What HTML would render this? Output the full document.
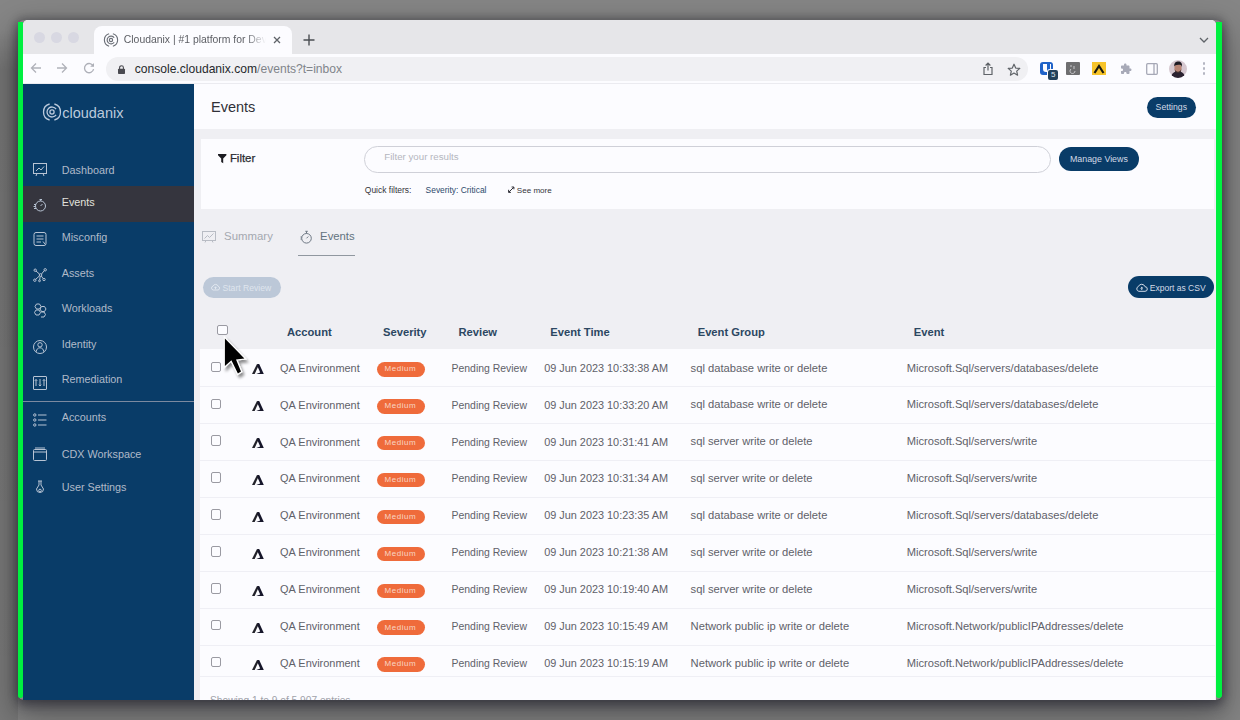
<!DOCTYPE html>
<html><head><meta charset="utf-8">
<style>
*{box-sizing:border-box;margin:0;padding:0}
html,body{width:1240px;height:720px;overflow:hidden}
body{background:#868686;font-family:"Liberation Sans",sans-serif;position:relative}
.a{position:absolute}
.t{position:absolute;white-space:nowrap;line-height:1}
svg{position:absolute;overflow:visible}
#win{left:23px;top:20px;width:1193px;height:680px;overflow:hidden;background:#fcfcff;border-radius:5px 5px 0 0}
#shadow{left:18px;top:20px;width:1204px;height:680px;border-radius:6px;box-shadow:0 0 8px 2px rgba(10,10,20,.25),0 6px 12px 1px rgba(20,20,40,.35),0 14px 36px 6px rgba(0,0,0,.30)}
.green{background:#00f040;top:22px;height:676px;border-radius:0 0 3px 3px}
#tabstrip{left:0;top:0;width:1193px;height:34px;background:#e6e6e9}
.tl{width:11px;height:11px;border-radius:50%;background:#d8d8e2}
#tab{left:71px;top:6px;width:198px;height:28px;background:#fcfcff;border-radius:8px 8px 0 0}
#toolbar{left:0;top:34px;width:1193px;height:30px;background:#fcfcff}
#omni{left:83px;top:36.5px;width:922px;height:24px;border-radius:12px;background:#f0f0f3}
#side{left:0;top:64px;width:171px;height:616px;background:#093c68;overflow:hidden}
.navact{left:0;top:102px;width:171px;height:36px;background:#35353e}
#main{left:171px;top:64px;width:1022px;height:616px;background:#efeff3;overflow:hidden}
.card{background:#fcfcff}
.btn{position:absolute;background:#093c68;border-radius:13px}
.cb{position:absolute;width:10.5px;height:10.5px;border:1px solid #9a9aa2;border-radius:2px;background:#fcfcff}
.sep{position:absolute;height:1px;background:#efeff5}
.badge{position:absolute;background:#ef6b3b;border-radius:7.5px;width:48px;height:14.5px}
</style></head>
<body>
<div class="a" style="left:0;top:30px;width:18px;height:690px;background:linear-gradient(180deg,rgba(0,0,0,0) 0,rgba(0,0,0,.12) 40px,rgba(0,0,0,.09) 100%)"></div>
<div id="shadow" class="a"></div>
<div class="a green" style="left:18px;width:5px"></div>
<div class="a green" style="left:1216px;width:6px"></div>
<div id="win" class="a">
<div id="tabstrip" class="a">
<div class="a tl" style="left:11.3px;top:12.0px"></div>
<div class="a tl" style="left:27.5px;top:12.0px"></div>
<div class="a tl" style="left:44.5px;top:12.0px"></div>
<div id="tab" class="a"></div>
</div>
<svg class="a" style="left:80.5px;top:12.600000000000001px" width="14" height="14" viewBox="0 0 18 18"><g fill="none" stroke="#6c7078" stroke-width="1.5"><path d="M6.6 1A8.3 8.3 0 0 0 6.6 17"/><path d="M11.4 1A8.3 8.3 0 0 1 11.4 17"/><path d="M13.1 6.1A5 5 0 1 0 13.1 11.9"/><circle cx="9" cy="9" r="2.1"/></g></svg>
<div class="t" style="left:100.8px;top:15.00px;font-size:10.4px;color:#5c5e64;width:142px;overflow:hidden;-webkit-mask-image:linear-gradient(90deg,#000 86%,transparent 100%)">Cloudanix | #1 platform for Dev</div>
<svg class="a" style="left:250px;top:15.5px" width="8" height="8" viewBox="0 0 8 8"><path d="M1 1L7 7M7 1L1 7" stroke="#5f6368" stroke-width="1.3"/></svg>
<svg class="a" style="left:280px;top:14px" width="12" height="12" viewBox="0 0 12 12"><path d="M6 0.5V11.5M0.5 6H11.5" stroke="#4a4d52" stroke-width="1.4"/></svg>
<svg class="a" style="left:1176px;top:17px" width="10" height="6" viewBox="0 0 10 6"><path d="M1 1L5 5L9 1" fill="none" stroke="#5f6368" stroke-width="1.3"/></svg>
<div id="toolbar" class="a"></div>
<div class="a" style="left:0;top:63px;width:1193px;height:1px;background:#ebebf0"></div>
<div id="omni" class="a"></div>
<svg class="a" style="left:7px;top:42px" width="12" height="12" viewBox="0 0 12 12"><path d="M11 6H1.5M6 1.5L1.5 6L6 10.5" fill="none" stroke="#b0b2ba" stroke-width="1.3"/></svg>
<svg class="a" style="left:33px;top:42px" width="12" height="12" viewBox="0 0 12 12"><path d="M1 6H10.5M6 1.5L10.5 6L6 10.5" fill="none" stroke="#b0b2ba" stroke-width="1.3"/></svg>
<svg class="a" style="left:59.5px;top:42px" width="12" height="12" viewBox="0 0 12 12"><path d="M10.3 4.2A4.6 4.6 0 1 0 10.6 7.2" fill="none" stroke="#aeb0b8" stroke-width="1.3"/><path d="M11 1V4.8H7.2Z" fill="#aeb0b8"/></svg>
<svg class="a" style="left:95px;top:44.5px" width="7" height="9" viewBox="0 0 7 9"><path d="M1.6 4V2.6A1.9 1.9 0 0 1 5.4 2.6V4" fill="none" stroke="#4a4a50" stroke-width="1.1"/><rect x="0" y="3.8" width="7" height="5.2" rx="0.8" fill="#4a4a50"/></svg>
<div class="t" style="left:111.7px;top:42.66px;font-size:12.1px;color:#26282c;">console.cloudanix.com<span style="color:#80848a">/events?t=inbox</span></div>
<svg class="a" style="left:959px;top:42px" width="12" height="14" viewBox="0 0 12 14"><path d="M4 5.5H2V12.5H10V5.5H8M6 8.5V1.2M3.6 3.5L6 1.2L8.4 3.5" fill="none" stroke="#5f6368" stroke-width="1.2"/></svg>
<svg class="a" style="left:984px;top:42.5px" width="14" height="14" viewBox="0 0 14 14"><path d="M7 1.2L8.7 5.1L12.8 5.4L9.7 8.1L10.6 12.2L7 10L3.4 12.2L4.3 8.1L1.2 5.4L5.3 5.1Z" fill="none" stroke="#5f6368" stroke-width="1.2" stroke-linejoin="round"/></svg>
<div class="a" style="left:1017px;top:42.3px;width:13px;height:12.5px;background:#1f62c8;border-radius:3px"></div>
<div class="a" style="left:1019.7px;top:44px;width:8px;height:8.3px;background:#fcfcff;border-radius:0 0 4px 3px"></div>
<div class="a" style="left:1024px;top:44px;width:2.6px;height:6.5px;background:#1f62c8"></div>
<div class="a" style="left:1024.3px;top:49.3px;width:11.7px;height:11.7px;background:#fcfcff;border-radius:3px"></div>
<div class="a" style="left:1025.3px;top:50.3px;width:9.7px;height:9.7px;background:#22405a;border-radius:2px;color:#dde4ee;font-size:8px;line-height:9.7px;text-align:center">5</div>
<div class="a" style="left:1043px;top:42.3px;width:13.5px;height:13px;background:#6e6e70;border-radius:1px"></div>
<svg class="a" style="left:1045px;top:44px" width="10" height="10" viewBox="0 0 10 10"><path d="M2 2H4M6 2V5M3 5A2.5 2.5 0 1 0 7 7" fill="none" stroke="#c8c8cc" stroke-width="1"/></svg>
<div class="a" style="left:1068.8px;top:41.8px;width:14.2px;height:13.6px;background:#f7c42a"></div>
<svg class="a" style="left:1070px;top:43.5px" width="12" height="10" viewBox="0 0 12 10"><path d="M1.5 9L6 2L10.5 9" fill="none" stroke="#1a1a10" stroke-width="2.2" stroke-linejoin="miter"/></svg>
<svg class="a" style="left:1096.5px;top:43px" width="12" height="12" viewBox="0 0 24 24"><path d="M20.5 11H19V7c0-1.1-.9-2-2-2h-4V3.5C13 2.12 11.88 1 10.5 1S8 2.12 8 3.5V5H4c-1.1 0-1.99.9-1.99 2v3.8H3.5c1.49 0 2.7 1.21 2.7 2.7s-1.21 2.7-2.7 2.7H2V20c0 1.1.9 2 2 2h3.8v-1.5c0-1.490 1.21-2.7 2.7-2.7 1.49 0 2.7 1.21 2.7 2.7V22H17c1.1 0 2-.9 2-2v-4h1.5c1.38 0 2.5-1.12 2.5-2.5S21.880 11 20.5 11z" fill="#a8aab8"/></svg>
<svg class="a" style="left:1122.8px;top:42.9px" width="12" height="12" viewBox="0 0 12 12"><rect x="0.7" y="0.7" width="10.6" height="10.6" rx="1" fill="none" stroke="#a6a8b6" stroke-width="1.3"/><path d="M8 0.7V11.3" stroke="#a6a8b6" stroke-width="1.3"/></svg>
<svg class="a" style="left:1145.9px;top:39.7px" width="18" height="18" viewBox="0 0 18 18"><defs><clipPath id="av"><circle cx="9" cy="9" r="9"/></clipPath></defs><g clip-path="url(#av)"><rect width="18" height="18" fill="#d6c8d0"/><path d="M2 18C2.5 13 5 11.5 9 11.5S15.5 13 16 18Z" fill="#2a2230"/><ellipse cx="9" cy="8" rx="3.6" ry="4.4" fill="#b88474"/><path d="M5.2 6.5C5 2.8 7 1.6 9.4 1.6S13.4 3 13 7L12.2 5.2C10.5 4.6 8 4.6 6 5.4Z" fill="#1e1a22"/><path d="M5.8 9C6.5 12.6 11.5 12.6 12.2 9L12 11.5C10.5 13.4 7.5 13.4 6 11.5Z" fill="#3a2a2a"/></g></svg>
<div class="a" style="left:1179.8px;top:42.3px;width:2.4px;height:2.4px;border-radius:50%;background:#b4b6c2"></div>
<div class="a" style="left:1179.8px;top:47.3px;width:2.4px;height:2.4px;border-radius:50%;background:#b4b6c2"></div>
<div class="a" style="left:1179.8px;top:52.3px;width:2.4px;height:2.4px;border-radius:50%;background:#b4b6c2"></div>
<div id="side" class="a">
<div class="a navact"></div>
<svg style="left:19.9px;top:18.7px" width="18" height="18" viewBox="0 0 18 18"><g fill="none" stroke="#bccadc" stroke-width="1.3"><path d="M6.6 1A8.3 8.3 0 0 0 6.6 17"/><path d="M11.4 1A8.3 8.3 0 0 1 11.4 17"/><path d="M13.1 6.1A5 5 0 1 0 13.1 11.9"/><circle cx="9" cy="9" r="2.1"/></g></svg>
<div class="t" style="left:39.2px;top:21.63px;font-size:14.5px;color:#bccadc;letter-spacing:0px">cloudanix</div>
<div class="t" style="left:38.7px;top:80.96px;font-size:10.8px;color:#b0bac8;">Dashboard</div>
<div class="t" style="left:38.7px;top:112.66px;font-size:10.8px;color:#e2e2dc;">Events</div>
<div class="t" style="left:38.7px;top:148.36px;font-size:10.8px;color:#b0bac8;">Misconfig</div>
<div class="t" style="left:38.7px;top:183.86px;font-size:10.8px;color:#b0bac8;">Assets</div>
<div class="t" style="left:38.7px;top:219.26px;font-size:10.8px;color:#b0bac8;">Workloads</div>
<div class="t" style="left:38.7px;top:254.66px;font-size:10.8px;color:#b0bac8;">Identity</div>
<div class="t" style="left:38.7px;top:290.06px;font-size:10.8px;color:#b0bac8;">Remediation</div>
<div class="t" style="left:38.7px;top:328.16px;font-size:10.8px;color:#b0bac8;">Accounts</div>
<div class="t" style="left:38.7px;top:365.16px;font-size:10.8px;color:#b0bac8;">CDX Workspace</div>
<div class="t" style="left:38.7px;top:397.66px;font-size:10.8px;color:#b0bac8;">User Settings</div>
<div class="a" style="left:0;top:316.5px;width:171px;height:1px;background:#7c8aa0"></div>
<svg style="left:9.8px;top:79.3px" width="14" height="14" viewBox="0 0 14 14"><g fill="none" stroke="#b8c4d4" stroke-width="1"><rect x="0.5" y="0.5" width="13" height="10"/><path d="M3 8L6 5L8 7L11 3.5M4 10.5L3 13M10 10.5L11 13"/></g></svg>
<svg style="left:9.8px;top:113.5px" width="14" height="14" viewBox="0 0 14 14"><g fill="none" stroke="#b8c4d4" stroke-width="1"><circle cx="7.5" cy="8" r="5"/><path d="M6.5 1.5H9M7.7 1.5V3M7.5 8L9.5 6M1 6.5H3M0.5 8.5H2.5M1 10.5H3"/></g></svg>
<svg style="left:9.8px;top:148.4px" width="14" height="14" viewBox="0 0 14 14"><g fill="none" stroke="#b8c4d4" stroke-width="1"><rect x="1" y="0.5" width="12" height="13" rx="2"/><path d="M3.5 4H10.5M3.5 7H10.5M3.5 10H8M10 9.5L12 12"/></g></svg>
<svg style="left:9.8px;top:184.4px" width="14" height="14" viewBox="0 0 14 14"><g fill="none" stroke="#b8c4d4" stroke-width="1"><circle cx="7.5" cy="7" r="1.3"/><circle cx="2.2" cy="2.2" r="1.2"/><circle cx="12.2" cy="1.8" r="1.2"/><circle cx="1.8" cy="12.2" r="1.2"/><circle cx="11" cy="11.5" r="1.2"/><circle cx="6.5" cy="12.8" r="0.9"/><path d="M3 3L6.6 6.2M11.4 2.5L8.4 6.2M2.6 11.4L6.6 7.8M10.2 10.7L8.3 8M7.2 8.3L6.7 11.9"/></g></svg>
<svg style="left:9.8px;top:219.0px" width="14" height="14" viewBox="0 0 14 14"><g fill="none" stroke="#b8c4d4" stroke-width="1"><path d="M3.5 1L6.5 1L8 3.5L6.5 6L3.5 6L2 3.5Z"/><path d="M8.5 3.5L11.5 3.5L13 6L11.5 8.5L8.5 8.5L7 6Z"/><path d="M3 7L6 7L7.5 9.5L6 12L3 12L1.5 9.5Z"/><path d="M8 9L11 9L12.5 11.5L11 14L8 14"/></g></svg>
<svg style="left:9.8px;top:255.8px" width="14" height="14" viewBox="0 0 14 14"><g fill="none" stroke="#b8c4d4" stroke-width="1"><circle cx="7" cy="7" r="6.5"/><circle cx="7" cy="4.8" r="2.2"/><path d="M3.2 11.8C3.6 9 5 7.8 7 7.8S10.4 9 10.8 11.8"/></g></svg>
<svg style="left:9.8px;top:291.9px" width="14" height="14" viewBox="0 0 14 14"><g fill="none" stroke="#b8c4d4" stroke-width="1"><rect x="0.5" y="0.5" width="13" height="13" rx="0.5"/><path d="M3 10V3.5M1.8 4.8L3 3.5L4.2 4.8M7 3V10M5.8 8.7L7 10L8.2 8.7M11 10V3.5M9.8 4.8L11 3.5L12.2 4.8"/></g></svg>
<svg style="left:9.8px;top:328.7px" width="14" height="14" viewBox="0 0 14 14"><g fill="none" stroke="#b8c4d4" stroke-width="1"><circle cx="1.8" cy="2" r="1.2"/><circle cx="1.8" cy="7" r="1.2"/><circle cx="1.8" cy="12" r="1.2"/><path d="M5 2H13.5M5 7H13.5M5 12H13.5"/></g></svg>
<svg style="left:9.8px;top:362.7px" width="14" height="14" viewBox="0 0 14 14"><g fill="none" stroke="#b8c4d4" stroke-width="1"><rect x="0.5" y="2.5" width="13" height="11" rx="1"/><path d="M0.5 5H13.5M2 1H12"/></g></svg>
<svg style="left:9.8px;top:396.0px" width="14" height="14" viewBox="0 0 14 14"><g fill="none" stroke="#b8c4d4" stroke-width="1"><path d="M6 1V5L3.5 9A3.3 3.3 0 1 0 10.5 9L8 5V1M5 1H9"/><circle cx="7" cy="10.5" r="1.3"/></g></svg>
</div>
<div id="main" class="a">
<div class="a card" style="left:0.0px;top:0.0px;width:1022.0px;height:45.0px;"></div>
<div class="a card" style="left:7.0px;top:54.5px;width:1013.0px;height:70.0px;"></div>
<div class="a card" style="left:6.0px;top:264.5px;width:1014.5px;height:351.5px;"></div>
<div class="t" style="left:17.0px;top:15.83px;font-size:14.5px;color:#303038;">Events</div>
<div class="btn" style="left:953px;top:12.799999999999997px;width:49px;height:21px"></div>
<div class="t" style="left:961.6px;top:18.94px;font-size:8.7px;color:#d3dae6;">Settings</div>
<svg style="left:23.8px;top:70.4px" width="8.4" height="9.2" viewBox="0 0 8.4 9.2"><path d="M0 0H8.4V1.2L5.2 4.6V9.2L3.2 8V4.6L0 1.2Z" fill="#1c1c22"/></svg>
<div class="t" style="left:35.9px;top:69.25px;font-size:11.4px;color:#2a2a30;-webkit-text-stroke:0.25px #2a2a30">Filter</div>
<div class="a" style="left:170.2px;top:62.2px;width:686.6px;height:26.6px;border:1px solid #cfd0d8;border-radius:13.3px;background:#fcfcff"></div>
<div class="t" style="left:190.3px;top:68.39px;font-size:9.7px;color:#b4b6be;">Filter your results</div>
<div class="btn" style="left:865.3px;top:62.7px;width:79.7px;height:24.6px;border-radius:12.3px"></div>
<div class="t" style="left:876.0px;top:70.71px;font-size:8.85px;color:#d3dae6;">Manage Views</div>
<div class="t" style="left:170.8px;top:102.43px;font-size:8.47px;color:#34343a;">Quick filters:</div>
<div class="t" style="left:231.6px;top:102.46px;font-size:8.44px;color:#2c4a6c;">Severity: Critical</div>
<svg style="left:313.6px;top:102.0px" width="6.5" height="7" viewBox="0 0 6.5 7"><path d="M0.8 6.2L5.8 1.2M3.6 1H5.9V3.3M0.6 3.8V6.4H2.9" fill="none" stroke="#303038" stroke-width="1"/></svg>
<div class="t" style="left:322.8px;top:102.77px;font-size:8.07px;color:#34343a;">See more</div>
<svg style="left:8.2px;top:147.0px" width="14" height="12" viewBox="0 0 14 12"><g fill="none" stroke="#b8bcc4" stroke-width="1"><rect x="0.5" y="0.5" width="13" height="9"/><path d="M2.5 7.5L5.5 4.5L7.5 6.5L11.5 2.5M4 9.5L3 11.5M10 9.5L11 11.5"/></g></svg>
<div class="t" style="left:30.1px;top:146.75px;font-size:11.4px;color:#a4a8b0;">Summary</div>
<svg style="left:105.6px;top:146.2px" width="12" height="14" viewBox="0 0 12 14"><g fill="none" stroke="#6e7884" stroke-width="1"><circle cx="6.5" cy="8.3" r="4.8"/><path d="M5.3 1.3H7.8M6.5 1.3V3.5M6.5 8.3L8.3 6.5M0.5 7H2M0.5 9H1.8"/></g></svg>
<div class="t" style="left:126.1px;top:146.83px;font-size:11.3px;color:#627280;">Events</div>
<div class="a " style="left:104.2px;top:170.5px;width:56.9px;height:1.7px;background:#90979f"></div>
<div class="btn" style="left:8.8px;top:192.6px;width:77.8px;height:21.4px;background:#bcc8d8;border-radius:11px"></div>
<svg style="left:17.0px;top:199.0px" width="9" height="8" viewBox="0 0 9 8"><path d="M2.2 7A2 2 0 0 1 2 3.1A2.8 2.8 0 0 1 7.2 3.3A1.9 1.9 0 0 1 7 7ZM4.5 6.2V3.8M3.5 4.8L4.5 3.8L5.5 4.8" fill="none" stroke="#e4eaf2" stroke-width="0.9"/></svg>
<div class="t" style="left:28.5px;top:200.12px;font-size:8.6px;color:#dfe5ee;">Start Review</div>
<div class="btn" style="left:933.9px;top:192.4px;width:86.1px;height:21.5px;border-radius:11px"></div>
<svg style="left:942.0px;top:198.6px" width="11.5" height="9" viewBox="0 0 11.5 9"><path d="M2.8 8.3A2.5 2.5 0 0 1 2.4 3.5A3.5 3.5 0 0 1 9 3.7A2.3 2.3 0 0 1 9 8.3ZM5.75 7V4.3M4.6 5.4L5.75 4.3L6.9 5.4" fill="none" stroke="#d3dae6" stroke-width="1"/></svg>
<div class="t" style="left:955.7px;top:200.17px;font-size:8.54px;color:#d3dae6;">Export as CSV</div>
<div class="cb" style="left:23.2px;top:240.7px;width:10.7px;height:10.3px"></div>
<div class="t" style="left:93.0px;top:242.72px;font-size:11.2px;color:#2c4762;font-weight:bold;">Account</div>
<div class="t" style="left:189.0px;top:242.72px;font-size:11.2px;color:#2c4762;font-weight:bold;">Severity</div>
<div class="t" style="left:264.5px;top:242.72px;font-size:11.2px;color:#2c4762;font-weight:bold;">Review</div>
<div class="t" style="left:356.3px;top:242.72px;font-size:11.2px;color:#2c4762;font-weight:bold;">Event Time</div>
<div class="t" style="left:503.7px;top:242.72px;font-size:11.2px;color:#2c4762;font-weight:bold;">Event Group</div>
<div class="t" style="left:719.8px;top:242.72px;font-size:11.2px;color:#2c4762;font-weight:bold;">Event</div>
<div class="cb" style="left:16.6px;top:277.60px"></div>
<svg style="left:58.3px;top:280.40px" width="12" height="10" viewBox="0 0 12 10"><path d="M0 10H2.7L6.6 1.6L5.6 0H5Z" fill="#22222a"/><path d="M5.8 0H7.2L11.8 10H4.2L8.2 8.4L5.4 2.2Z" fill="#16162a"/></svg>
<div class="t" style="left:86.1px;top:278.73px;font-size:10.95px;color:#606169;">QA Environment</div>
<div class="badge" style="left:182.6px;top:278.10px"></div>
<div class="t" style="left:190.6px;top:281.23px;font-size:8px;color:#f8d6c4;letter-spacing:0.5px">Medium</div>
<div class="t" style="left:257.5px;top:279.75px;font-size:10.45px;color:#606169;">Pending Review</div>
<div class="t" style="left:350.2px;top:278.79px;font-size:10.88px;color:#606169;">09 Jun 2023 10:33:38 AM</div>
<div class="t" style="left:496.6px;top:278.52px;font-size:11.2px;color:#606169;">sql database write or delete</div>
<div class="t" style="left:712.7px;top:278.57px;font-size:11.14px;color:#606169;">Microsoft.Sql/servers/databases/delete</div>
<div class="a sep" style="left:6.0px;top:302.4px;width:1014.5px;height:1.0px;"></div>
<div class="cb" style="left:16.6px;top:314.50px"></div>
<svg style="left:58.3px;top:317.30px" width="12" height="10" viewBox="0 0 12 10"><path d="M0 10H2.7L6.6 1.6L5.6 0H5Z" fill="#22222a"/><path d="M5.8 0H7.2L11.8 10H4.2L8.2 8.4L5.4 2.2Z" fill="#16162a"/></svg>
<div class="t" style="left:86.1px;top:315.63px;font-size:10.95px;color:#606169;">QA Environment</div>
<div class="badge" style="left:182.6px;top:315.00px"></div>
<div class="t" style="left:190.6px;top:318.13px;font-size:8px;color:#f8d6c4;letter-spacing:0.5px">Medium</div>
<div class="t" style="left:257.5px;top:316.65px;font-size:10.45px;color:#606169;">Pending Review</div>
<div class="t" style="left:350.2px;top:315.69px;font-size:10.88px;color:#606169;">09 Jun 2023 10:33:20 AM</div>
<div class="t" style="left:496.6px;top:315.42px;font-size:11.2px;color:#606169;">sql database write or delete</div>
<div class="t" style="left:712.7px;top:315.47px;font-size:11.14px;color:#606169;">Microsoft.Sql/servers/databases/delete</div>
<div class="a sep" style="left:6.0px;top:339.3px;width:1014.5px;height:1.0px;"></div>
<div class="cb" style="left:16.6px;top:351.40px"></div>
<svg style="left:58.3px;top:354.20px" width="12" height="10" viewBox="0 0 12 10"><path d="M0 10H2.7L6.6 1.6L5.6 0H5Z" fill="#22222a"/><path d="M5.8 0H7.2L11.8 10H4.2L8.2 8.4L5.4 2.2Z" fill="#16162a"/></svg>
<div class="t" style="left:86.1px;top:352.53px;font-size:10.95px;color:#606169;">QA Environment</div>
<div class="badge" style="left:182.6px;top:351.90px"></div>
<div class="t" style="left:190.6px;top:355.03px;font-size:8px;color:#f8d6c4;letter-spacing:0.5px">Medium</div>
<div class="t" style="left:257.5px;top:353.55px;font-size:10.45px;color:#606169;">Pending Review</div>
<div class="t" style="left:350.2px;top:352.59px;font-size:10.88px;color:#606169;">09 Jun 2023 10:31:41 AM</div>
<div class="t" style="left:496.6px;top:352.32px;font-size:11.2px;color:#606169;">sql server write or delete</div>
<div class="t" style="left:712.7px;top:352.37px;font-size:11.14px;color:#606169;">Microsoft.Sql/servers/write</div>
<div class="a sep" style="left:6.0px;top:376.2px;width:1014.5px;height:1.0px;"></div>
<div class="cb" style="left:16.6px;top:388.30px"></div>
<svg style="left:58.3px;top:391.10px" width="12" height="10" viewBox="0 0 12 10"><path d="M0 10H2.7L6.6 1.6L5.6 0H5Z" fill="#22222a"/><path d="M5.8 0H7.2L11.8 10H4.2L8.2 8.4L5.4 2.2Z" fill="#16162a"/></svg>
<div class="t" style="left:86.1px;top:389.43px;font-size:10.95px;color:#606169;">QA Environment</div>
<div class="badge" style="left:182.6px;top:388.80px"></div>
<div class="t" style="left:190.6px;top:391.93px;font-size:8px;color:#f8d6c4;letter-spacing:0.5px">Medium</div>
<div class="t" style="left:257.5px;top:390.45px;font-size:10.45px;color:#606169;">Pending Review</div>
<div class="t" style="left:350.2px;top:389.49px;font-size:10.88px;color:#606169;">09 Jun 2023 10:31:34 AM</div>
<div class="t" style="left:496.6px;top:389.22px;font-size:11.2px;color:#606169;">sql server write or delete</div>
<div class="t" style="left:712.7px;top:389.27px;font-size:11.14px;color:#606169;">Microsoft.Sql/servers/write</div>
<div class="a sep" style="left:6.0px;top:413.1px;width:1014.5px;height:1.0px;"></div>
<div class="cb" style="left:16.6px;top:425.20px"></div>
<svg style="left:58.3px;top:428.00px" width="12" height="10" viewBox="0 0 12 10"><path d="M0 10H2.7L6.6 1.6L5.6 0H5Z" fill="#22222a"/><path d="M5.8 0H7.2L11.8 10H4.2L8.2 8.4L5.4 2.2Z" fill="#16162a"/></svg>
<div class="t" style="left:86.1px;top:426.33px;font-size:10.95px;color:#606169;">QA Environment</div>
<div class="badge" style="left:182.6px;top:425.70px"></div>
<div class="t" style="left:190.6px;top:428.83px;font-size:8px;color:#f8d6c4;letter-spacing:0.5px">Medium</div>
<div class="t" style="left:257.5px;top:427.35px;font-size:10.45px;color:#606169;">Pending Review</div>
<div class="t" style="left:350.2px;top:426.39px;font-size:10.88px;color:#606169;">09 Jun 2023 10:23:35 AM</div>
<div class="t" style="left:496.6px;top:426.12px;font-size:11.2px;color:#606169;">sql database write or delete</div>
<div class="t" style="left:712.7px;top:426.17px;font-size:11.14px;color:#606169;">Microsoft.Sql/servers/databases/delete</div>
<div class="a sep" style="left:6.0px;top:450.0px;width:1014.5px;height:1.0px;"></div>
<div class="cb" style="left:16.6px;top:462.10px"></div>
<svg style="left:58.3px;top:464.90px" width="12" height="10" viewBox="0 0 12 10"><path d="M0 10H2.7L6.6 1.6L5.6 0H5Z" fill="#22222a"/><path d="M5.8 0H7.2L11.8 10H4.2L8.2 8.4L5.4 2.2Z" fill="#16162a"/></svg>
<div class="t" style="left:86.1px;top:463.23px;font-size:10.95px;color:#606169;">QA Environment</div>
<div class="badge" style="left:182.6px;top:462.60px"></div>
<div class="t" style="left:190.6px;top:465.73px;font-size:8px;color:#f8d6c4;letter-spacing:0.5px">Medium</div>
<div class="t" style="left:257.5px;top:464.25px;font-size:10.45px;color:#606169;">Pending Review</div>
<div class="t" style="left:350.2px;top:463.29px;font-size:10.88px;color:#606169;">09 Jun 2023 10:21:38 AM</div>
<div class="t" style="left:496.6px;top:463.02px;font-size:11.2px;color:#606169;">sql server write or delete</div>
<div class="t" style="left:712.7px;top:463.07px;font-size:11.14px;color:#606169;">Microsoft.Sql/servers/write</div>
<div class="a sep" style="left:6.0px;top:486.9px;width:1014.5px;height:1.0px;"></div>
<div class="cb" style="left:16.6px;top:499.00px"></div>
<svg style="left:58.3px;top:501.80px" width="12" height="10" viewBox="0 0 12 10"><path d="M0 10H2.7L6.6 1.6L5.6 0H5Z" fill="#22222a"/><path d="M5.8 0H7.2L11.8 10H4.2L8.2 8.4L5.4 2.2Z" fill="#16162a"/></svg>
<div class="t" style="left:86.1px;top:500.13px;font-size:10.95px;color:#606169;">QA Environment</div>
<div class="badge" style="left:182.6px;top:499.50px"></div>
<div class="t" style="left:190.6px;top:502.63px;font-size:8px;color:#f8d6c4;letter-spacing:0.5px">Medium</div>
<div class="t" style="left:257.5px;top:501.15px;font-size:10.45px;color:#606169;">Pending Review</div>
<div class="t" style="left:350.2px;top:500.19px;font-size:10.88px;color:#606169;">09 Jun 2023 10:19:40 AM</div>
<div class="t" style="left:496.6px;top:499.92px;font-size:11.2px;color:#606169;">sql server write or delete</div>
<div class="t" style="left:712.7px;top:499.97px;font-size:11.14px;color:#606169;">Microsoft.Sql/servers/write</div>
<div class="a sep" style="left:6.0px;top:523.8px;width:1014.5px;height:1.0px;"></div>
<div class="cb" style="left:16.6px;top:535.90px"></div>
<svg style="left:58.3px;top:538.70px" width="12" height="10" viewBox="0 0 12 10"><path d="M0 10H2.7L6.6 1.6L5.6 0H5Z" fill="#22222a"/><path d="M5.8 0H7.2L11.8 10H4.2L8.2 8.4L5.4 2.2Z" fill="#16162a"/></svg>
<div class="t" style="left:86.1px;top:537.03px;font-size:10.95px;color:#606169;">QA Environment</div>
<div class="badge" style="left:182.6px;top:536.40px"></div>
<div class="t" style="left:190.6px;top:539.53px;font-size:8px;color:#f8d6c4;letter-spacing:0.5px">Medium</div>
<div class="t" style="left:257.5px;top:538.05px;font-size:10.45px;color:#606169;">Pending Review</div>
<div class="t" style="left:350.2px;top:537.09px;font-size:10.88px;color:#606169;">09 Jun 2023 10:15:49 AM</div>
<div class="t" style="left:496.6px;top:536.82px;font-size:11.2px;color:#606169;">Network public ip write or delete</div>
<div class="t" style="left:712.7px;top:536.87px;font-size:11.14px;color:#606169;">Microsoft.Network/publicIPAddresses/delete</div>
<div class="a sep" style="left:6.0px;top:560.7px;width:1014.5px;height:1.0px;"></div>
<div class="cb" style="left:16.6px;top:572.80px"></div>
<svg style="left:58.3px;top:575.60px" width="12" height="10" viewBox="0 0 12 10"><path d="M0 10H2.7L6.6 1.6L5.6 0H5Z" fill="#22222a"/><path d="M5.8 0H7.2L11.8 10H4.2L8.2 8.4L5.4 2.2Z" fill="#16162a"/></svg>
<div class="t" style="left:86.1px;top:573.93px;font-size:10.95px;color:#606169;">QA Environment</div>
<div class="badge" style="left:182.6px;top:573.30px"></div>
<div class="t" style="left:190.6px;top:576.43px;font-size:8px;color:#f8d6c4;letter-spacing:0.5px">Medium</div>
<div class="t" style="left:257.5px;top:574.95px;font-size:10.45px;color:#606169;">Pending Review</div>
<div class="t" style="left:350.2px;top:573.99px;font-size:10.88px;color:#606169;">09 Jun 2023 10:15:19 AM</div>
<div class="t" style="left:496.6px;top:573.72px;font-size:11.2px;color:#606169;">Network public ip write or delete</div>
<div class="t" style="left:712.7px;top:573.77px;font-size:11.14px;color:#606169;">Microsoft.Network/publicIPAddresses/delete</div>
<div class="a sep" style="left:6.0px;top:592.0px;width:1014.5px;height:1.0px;"></div>
<div class="t" style="left:16.0px;top:612.37px;font-size:10.2px;color:#a0a2aa;">Showing 1 to 9 of 5,907 entries</div>
</div>
</div>
<svg style="left:222px;top:334px" width="26" height="44" viewBox="0 0 26 44"><defs><filter id="cs" x="-50%" y="-50%" width="200%" height="200%"><feGaussianBlur in="SourceAlpha" stdDeviation="1.6"/><feOffset dx="1.5" dy="2.5"/><feComponentTransfer><feFuncA type="linear" slope="0.45"/></feComponentTransfer><feMerge><feMergeNode/><feMergeNode in="SourceGraphic"/></feMerge></filter></defs><path filter="url(#cs)" d="M2.9 4.4V32L9.4 26.2L15.9 39.5L19 37.6L14 25.4L22.4 24.6Z" fill="#000" stroke="#fff" stroke-width="2.4" stroke-linejoin="miter" stroke-miterlimit="6" paint-order="stroke"/></svg>
</body></html>
